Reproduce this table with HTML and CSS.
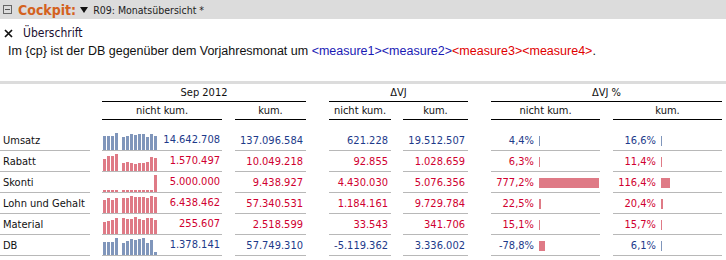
FILE: index.html
```html
<!DOCTYPE html>
<html lang="de">
<head>
  <meta charset="UTF-8">
  <title>Cockpit - R09: Monatsübersicht</title>
  <link rel="stylesheet" href="styles.css">
</head>
<body>
  <div class="titlebar">
    <span class="collapse"></span>
    <span class="cockpit">Cockpit:</span>
    <span class="caret"></span>
    <span class="report">R09: Monatsübersicht *</span>
  </div>

  <div class="heading">
    <svg class="close" width="9" height="9" viewBox="0 0 9 9"><path d="M1 1L8 8M8 1L1 8" stroke="#111" stroke-width="1.7"/></svg>
    <span>Überschrift</span>
  </div>
  <p class="sentence">Im {cp} ist der DB gegenüber dem Vorjahresmonat um <span class="m-blue">&lt;measure1&gt;&lt;measure2&gt;</span><span class="m-red">&lt;measure3&gt;&lt;measure4&gt;</span>.</p>

  <div class="sep"></div>

  <div class="report-table">
    <div class="hrow">
      <div class="hcell g-sep">Sep 2012</div>
      <div class="hcell g-vj">&Delta;VJ</div>
      <div class="hcell g-pct">&Delta;VJ %</div>
    </div>
    <div class="hrow sub">
      <div class="hcell c-spark">nicht kum.</div>
      <div class="hcell c-kum">kum.</div>
      <div class="hcell c-vj">nicht kum.</div>
      <div class="hcell c-vjk">kum.</div>
      <div class="hcell c-pct">nicht kum.</div>
      <div class="hcell c-pctk">kum.</div>
    </div>

    <div class="row blue">
      <div class="cell c-label">Umsatz</div>
      <div class="cell c-spark">
        <div class="spark">
          <i style="height:14px"></i><i style="height:14px"></i><i style="height:14px"></i><i style="height:17px"></i>
          <i class="gap" style="height:13px"></i><i style="height:14px"></i><i style="height:16px"></i><i style="height:15px"></i><i style="height:16px"></i><i style="height:16px"></i><i style="height:13px"></i><i style="height:16px"></i><i style="height:14px"></i>
        </div>
        <span class="val">14.642.708</span>
      </div>
      <div class="cell c-kum">137.096.584</div>
      <div class="cell c-vj">621.228</div>
      <div class="cell c-vjk">19.512.507</div>
      <div class="cell c-pct"><span class="pv">4,4%</span><span class="bar" style="width:1px"></span></div>
      <div class="cell c-pctk"><span class="pv">16,6%</span><span class="bar" style="width:1px"></span></div>
    </div>

    <div class="row red">
      <div class="cell c-label">Rabatt</div>
      <div class="cell c-spark">
        <div class="spark">
          <i style="height:12px"></i><i style="height:15px"></i><i style="height:15px"></i><i style="height:17px"></i>
          <i class="gap" style="height:8px"></i><i style="height:9px"></i><i style="height:8px"></i><i style="height:7px"></i><i style="height:8px"></i><i style="height:8px"></i><i style="height:9px"></i><i style="height:14px"></i><i style="height:13px"></i>
        </div>
        <span class="val">1.570.497</span>
      </div>
      <div class="cell c-kum">10.049.218</div>
      <div class="cell c-vj">92.855</div>
      <div class="cell c-vjk">1.028.659</div>
      <div class="cell c-pct"><span class="pv">6,3%</span><span class="bar" style="width:1px"></span></div>
      <div class="cell c-pctk"><span class="pv">11,4%</span><span class="bar" style="width:1px"></span></div>
    </div>

    <div class="row red">
      <div class="cell c-label">Skonti</div>
      <div class="cell c-spark">
        <div class="spark">
          <i style="height:2px"></i><i style="height:2px"></i><i style="height:2px"></i><i style="height:2px"></i>
          <i class="gap" style="height:2px"></i><i style="height:2px"></i><i style="height:2px"></i><i style="height:2px"></i><i style="height:2px"></i><i style="height:2px"></i><i style="height:2px"></i><i style="height:2px"></i><i style="height:17px"></i>
        </div>
        <span class="val">5.000.000</span>
      </div>
      <div class="cell c-kum">9.438.927</div>
      <div class="cell c-vj">4.430.030</div>
      <div class="cell c-vjk">5.076.356</div>
      <div class="cell c-pct"><span class="pv">777,2%</span><span class="bar" style="width:60px"></span></div>
      <div class="cell c-pctk"><span class="pv">116,4%</span><span class="bar" style="width:9px"></span></div>
    </div>

    <div class="row red">
      <div class="cell c-label">Lohn und Gehalt</div>
      <div class="cell c-spark">
        <div class="spark">
          <i style="height:13px"></i><i style="height:15px"></i><i style="height:13px"></i><i style="height:15px"></i>
          <i class="gap" style="height:15px"></i><i style="height:15px"></i><i style="height:17px"></i><i style="height:16px"></i><i style="height:16px"></i><i style="height:16px"></i><i style="height:15px"></i><i style="height:17px"></i><i style="height:16px"></i>
        </div>
        <span class="val">6.438.462</span>
      </div>
      <div class="cell c-kum">57.340.531</div>
      <div class="cell c-vj">1.184.161</div>
      <div class="cell c-vjk">9.729.784</div>
      <div class="cell c-pct"><span class="pv">22,5%</span><span class="bar" style="width:2px"></span></div>
      <div class="cell c-pctk"><span class="pv">20,4%</span><span class="bar" style="width:2px"></span></div>
    </div>

    <div class="row red">
      <div class="cell c-label">Material</div>
      <div class="cell c-spark">
        <div class="spark">
          <i style="height:12px"></i><i style="height:13px"></i><i style="height:14px"></i><i style="height:16px"></i>
          <i class="gap" style="height:16px"></i><i style="height:15px"></i><i style="height:15px"></i><i style="height:17px"></i><i style="height:15px"></i><i style="height:14px"></i><i style="height:16px"></i><i style="height:16px"></i><i style="height:14px"></i>
        </div>
        <span class="val">255.607</span>
      </div>
      <div class="cell c-kum">2.518.599</div>
      <div class="cell c-vj">33.543</div>
      <div class="cell c-vjk">341.706</div>
      <div class="cell c-pct"><span class="pv">15,1%</span><span class="bar" style="width:1px"></span></div>
      <div class="cell c-pctk"><span class="pv">15,7%</span><span class="bar" style="width:1px"></span></div>
    </div>

    <div class="row blue">
      <div class="cell c-label">DB</div>
      <div class="cell c-spark">
        <div class="spark">
          <i style="height:13px"></i><i style="height:13px"></i><i style="height:13px"></i><i style="height:17px"></i>
          <i class="gap" style="height:12px"></i><i style="height:14px"></i><i style="height:16px"></i><i style="height:15px"></i><i style="height:16px"></i><i style="height:17px"></i><i style="height:12px"></i><i style="height:15px"></i><i style="height:3px"></i>
        </div>
        <span class="val">1.378.141</span>
      </div>
      <div class="cell c-kum">57.749.310</div>
      <div class="cell c-vj red-text">-5.119.362</div>
      <div class="cell c-vjk">3.336.002</div>
      <div class="cell c-pct red-text"><span class="pv">-78,8%</span><span class="bar red-bar" style="width:6px"></span></div>
      <div class="cell c-pctk"><span class="pv">6,1%</span><span class="bar" style="width:1px"></span></div>
    </div>
  </div>
</body>
</html>
```

FILE: styles.css
```css
* {
  box-sizing: border-box;
  margin: 0;
  padding: 0;
}

body {
  background: #fff;
  color: #111;
  font-family: 'DejaVu Sans Condensed', 'DejaVu Sans', sans-serif;
  font-size: 11px;
}

.titlebar {
  height: 19px;
  background: #dcdcdc;
  display: flex;
  align-items: center;
  padding-left: 3px;
}

.collapse {
  width: 9px;
  height: 9px;
  border: 1px solid #666;
  position: relative;
  margin-right: 6px;
}

.collapse::after {
  content: '';
  position: absolute;
  left: 1px;
  right: 1px;
  top: 3px;
  height: 1px;
  background: #555;
}

.cockpit {
  color: #d4621e;
  font-weight: bold;
  font-size: 14px;
  margin-right: 4px;
}

.caret {
  width: 0;
  height: 0;
  border-left: 4px solid transparent;
  border-right: 4px solid transparent;
  border-top: 6px solid #111;
  margin-top: 1px;
  margin-right: 5px;
}

.report {
  font-size: 10.5px;
  color: #222;
}

.heading {
  height: 18px;
  margin-top: 5px;
  display: flex;
  align-items: center;
  font-size: 12px;
  color: #1c1030;
  padding-left: 4px;
}

.close {
  margin-right: 10px;
}

.sentence {
  font-family: 'Liberation Sans', Arial, sans-serif;
  font-size: 12.5px;
  line-height: 18px;
  padding-left: 8px;
  color: #111;
}

.m-blue {
  color: #1a1ab4;
}

.m-red {
  color: #e00000;
}

.sep {
  height: 3px;
  background: #dcdcdc;
  margin-top: 21px;
}

.report-table {
  margin-top: 1px;
}

.hrow {
  display: flex;
  height: 17px;
}

.hrow.sub {
  height: 18px;
  margin-bottom: 10px;
}

.hcell {
  border-bottom: 1px solid #000;
  text-align: center;
  line-height: 16px;
}

.g-sep {
  margin-left: 102px;
  width: 204px;
}

.g-vj {
  margin-left: 23px;
  width: 139px;
}

.g-pct {
  margin-left: 23px;
  width: 231px;
}

.row {
  display: flex;
  height: 21px;
}

.cell {
  height: 21px;
  border-bottom: 1px solid #b8b8b8;
  line-height: 21px;
  text-align: right;
  padding-right: 3px;
}

.c-label {
  width: 90px;
  text-align: left;
  padding-left: 3px;
  color: #111;
}

.c-spark {
  width: 120px;
  margin-left: 12px;
}

.c-kum {
  width: 71px;
  margin-left: 13px;
}

.c-vj {
  width: 62px;
  margin-left: 23px;
}

.c-vjk {
  width: 65px;
  margin-left: 12px;
}

.c-pct {
  width: 109px;
  margin-left: 23px;
}

.c-pctk {
  width: 109px;
  margin-left: 13px;
}

.hcell.c-spark, .hcell.c-kum, .hcell.c-vj, .hcell.c-vjk, .hcell.c-pct, .hcell.c-pctk {
  height: 18px;
  line-height: 18px;
  text-align: center;
  padding: 0;
}

.hcell.c-spark {
  margin-left: 102px;
}

.row .c-spark {
  display: flex;
  align-items: flex-end;
  padding-left: 1px;
  padding-right: 2px;
}

.spark {
  display: flex;
  align-items: flex-end;
  height: 20px;
  width: 56px;
}

.spark i {
  display: block;
  width: 3px;
  margin-right: 1px;
}

.spark i.gap {
  margin-left: 3px;
}

.val {
  flex: 1;
  text-align: right;
  line-height: 20px;
}

.row .c-pct, .row .c-pctk {
  display: flex;
  align-items: center;
  padding: 0;
}

.pv {
  width: 43px;
  text-align: right;
  margin-right: 5px;
}

.bar {
  height: 10px;
  margin-top: 1px;
}

.blue .cell:not(.c-label) {
  color: #1d3a8a;
}

.blue .spark i, .blue .bar {
  background: #8096bb;
}

.red .cell:not(.c-label), .row .red-text {
  color: #d00030;
}

.red .spark i, .red .bar, .row .red-bar {
  background: #df7a86;
}
```
